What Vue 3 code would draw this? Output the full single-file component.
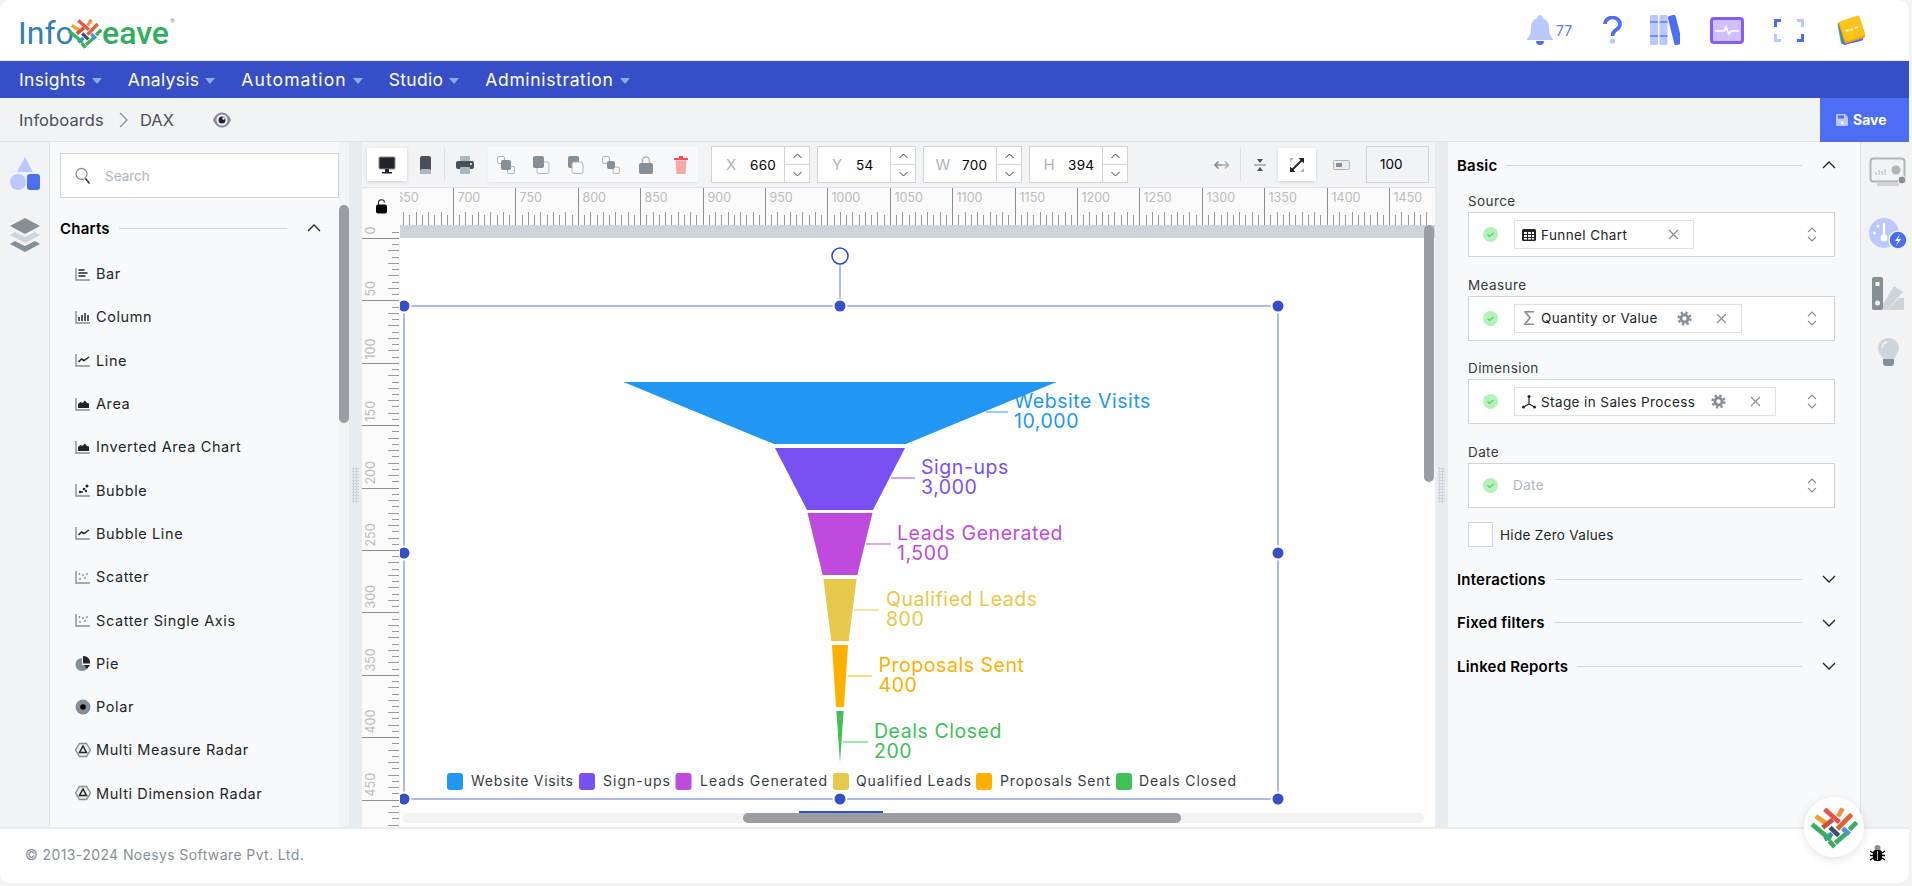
<template>
  <div class="app">
    <header class="topbar">
      <div class="logo">
        <span class="logo-info">Info</span>
        <svg class="logo-mark" viewBox="325 140 150 135">
          <line v-for="(s, i) in sticks" :key="i" :x1="s[0]" :y1="s[1]" :x2="s[2]" :y2="s[3]" :stroke="s[4]" stroke-width="14" />
        </svg>
        <span class="logo-eave">eave</span>
        <span class="logo-reg">®</span>
      </div>
      <div class="top-icons">
        <svg class="ti" width="26" height="30" viewBox="0 0 26 30">
          <path d="M13 0a2.500 2.500 0 0 1 2.500 3C20 4.500 22 8 22 13c0 5 1 8 4 11v1H0v-1c3-3 4-6 4-11 0-5 2-8.500 6.500-10A2.500 2.500 0 0 1 13 0z" fill="#bac8ff" />
          <path d="M9 26h8a4 4 0 0 1-8 0z" fill="#4c6ef5" />
        </svg>
        <span class="bell-count">77</span>
        <svg class="ti" style="margin-left:30px" width="19" height="28" viewBox="0 0 19 28">
          <path d="M2 8a7.500 6.500 0 1 1 11.500 5.500C11 15.500 9.500 16 9.500 20" fill="none" stroke="#4c6ef5" stroke-width="3.600" />
          <circle cx="9.500" cy="25" r="2.600" fill="#bac8ff" />
        </svg>
        <svg class="ti" style="margin-left:28px" width="30" height="30" viewBox="0 0 30 30">
          <rect x="0" y="0" width="8" height="30" rx="1.500" fill="#bac8ff" />
          <rect x="9.500" y="0" width="8" height="30" rx="1.500" fill="#bac8ff" />
          <path d="M0 7h8M0 21h8M9.500 7h8M9.500 21h8" stroke="#5c7cfa" stroke-width="1.500" />
          <rect x="21" y="0" width="8" height="30" rx="2" fill="#4c6ef5" transform="rotate(-14 25 15)" />
        </svg>
        <svg class="ti" style="margin-left:30px" width="34" height="27" viewBox="0 0 34 27">
          <rect x="1.500" y="1.500" width="31" height="24" rx="2.500" fill="#d0bfff" stroke="#845ef7" stroke-width="3" />
          <path d="M5 14h9l2-4 3 7 2-3h8" fill="none" stroke="#fff" stroke-width="1.600" />
        </svg>
        <svg class="ti" style="margin-left:30px" width="30" height="23" viewBox="0 0 30 23">
          <path d="M1.500 8V1.500H7" fill="none" stroke="#4c6ef5" stroke-width="3" />
          <path d="M1.500 15v6.500H7M23 1.500h5.500V8" fill="none" stroke="#bac8ff" stroke-width="3" />
          <path d="M28.500 15v6.500H23" fill="none" stroke="#4c6ef5" stroke-width="3" />
        </svg>
        <svg class="ti" style="margin-left:33px" width="28" height="30" viewBox="0 0 28 30">
          <rect x="2" y="6" width="20" height="22" rx="2" fill="#40c057" transform="rotate(-10 12 17)" />
          <rect x="3" y="6" width="21" height="22" rx="2" fill="#4c6ef5" transform="rotate(-14 14 16)" />
          <rect x="4" y="4" width="22" height="22" rx="2" fill="#fa9f05" transform="rotate(-18 15 15)" />
          <rect x="5" y="3" width="21" height="21" rx="2" fill="#fcc419" transform="rotate(-18 15 14)" />
          <path d="M9 16l3-1M13 15l3-1M18 13l3-1" stroke="#fff3bf" stroke-width="2" />
        </svg>
      </div>
    </header>

    <nav class="mainnav">
      <a v-for="m in menu" :key="m" class="nav-item">{{ m }}<i class="caret"></i></a>
    </nav>

    <div class="crumbs">
      <span class="crumb">Infoboards</span>
      <svg class="crumb-sep" width="9" height="16" viewBox="0 0 9 16"><path d="M1 1l7 7-7 7" fill="none" stroke="#868e96" stroke-width="1.200" /></svg>
      <span class="crumb">DAX</span>
      <svg class="eye" width="20" height="20" viewBox="0 0 20 20">
        <path d="M1 10c2-5 5.500-7.500 9-7.500s7 2.500 9 7.500c-2 5-5.500 7.500-9 7.500S3 15 1 10z" fill="#868e96" />
        <circle cx="10" cy="10" r="5.500" fill="#f1f3f5" />
        <circle cx="10" cy="10" r="3.500" fill="#212529" />
        <circle cx="11.500" cy="8.500" r="1.200" fill="#f1f3f5" />
      </svg>
      <button class="save">
        <svg width="12" height="12" viewBox="0 0 12 12"><path d="M1 0h8l3 3v8a1 1 0 0 1-1 1H1a1 1 0 0 1-1-1V1a1 1 0 0 1 1-1z" fill="#bac8ff" /><rect x="2" y="1.500" width="6" height="3" fill="#4c6ef5" /><rect x="5" y="7.500" width="2.500" height="2.500" fill="#fff" /></svg>
        Save
      </button>
    </div>

    <main class="body">
      <aside class="rail">
        <svg width="30" height="36" viewBox="0 0 30 36" class="rail-shapes">
          <path d="M15 0l8 15H7z" fill="#bac8ff" />
          <circle cx="8" cy="25" r="8" fill="#bac8ff" />
          <rect x="17" y="17" width="13" height="16" rx="3" fill="#4c6ef5" />
        </svg>
        <svg width="30" height="36" viewBox="0 0 30 36" class="rail-layers">
          <path d="M15 0l15 8-15 8L0 8z" fill="#868e96" />
          <path d="M0 17l5-3 10 5 10-5 5 3-15 8z" fill="#ced4da" />
          <path d="M0 26l5-3 10 5 10-5 5 3-15 8z" fill="#868e96" />
        </svg>
      </aside>

      <section class="palette">
        <div class="search">
          <svg width="16" height="18" viewBox="0 0 16 18"><circle cx="6.500" cy="7" r="5.500" fill="none" stroke="#868e96" stroke-width="1.300" /><path d="M10.500 11.500l4 5" stroke="#343a40" stroke-width="1.600" /></svg>
          <span>Search</span>
        </div>
        <div class="sec-head pal-head">
          <b>Charts</b><i class="rule"></i>
          <svg class="chev" width="14" height="8" viewBox="0 0 14 8"><path d="M1 7l6-6 6 6" fill="none" stroke="#212529" stroke-width="1.300" /></svg>
        </div>
        <div v-for="c in charts" :key="c.name" class="chart-item">
          <svg width="16" height="16" viewBox="0 0 16 16" v-html="chartIcons[c.icon]"></svg>
          <span>{{ c.name }}</span>
        </div>
        <div class="pal-track"><div class="pal-thumb"></div></div>
      </section>

      <div class="gutter"><i class="dots"></i></div>

      <section class="center">
        <div class="toolbar">
          <div class="tool on">
            <svg width="18" height="18" viewBox="0 0 18 18"><rect x="1" y="1" width="16" height="12" rx="1" fill="#212529" stroke="#868e96" /><path d="M7 13h4v3H7zM4 16h10v1.500H4z" fill="#212529" /></svg>
          </div>
          <div class="tool" style="width:37px">
            <svg width="11" height="18" viewBox="0 0 11 18"><rect width="11" height="18" rx="2" fill="#495057" /><rect y="13" width="11" height="5" rx="2" fill="#adb5bd" /></svg>
          </div>
          <i class="tsep"></i>
          <div class="tool" style="width:39px">
            <svg width="18" height="18" viewBox="0 0 18 18"><rect x="4" y="0" width="10" height="5" rx="1" fill="#adb5bd" /><rect x="0" y="5" width="18" height="8" rx="2" fill="#495057" /><rect x="4" y="11" width="10" height="7" rx="1" fill="#adb5bd" /><circle cx="15" cy="8" r="1" fill="#fff" /></svg>
          </div>
          <div class="tgroup">
            <div class="tslot"><svg width="18" height="18" viewBox="0 0 18 18"><rect x=".5" y=".5" width="7" height="7" rx="1.500" fill="none" stroke="#adb5bd" /><rect x="10.500" y="10.500" width="7" height="7" rx="1.500" fill="none" stroke="#adb5bd" /><rect x="4" y="4" width="10" height="10" rx="2" fill="#868e96" /></svg></div>
            <div class="tslot"><svg width="18" height="18" viewBox="0 0 18 18"><rect x="5" y="6" width="12" height="11.500" rx="2" fill="none" stroke="#adb5bd" /><rect x="1" y="0" width="11" height="12" rx="2" fill="#868e96" /></svg></div>
            <div class="tslot"><svg width="18" height="18" viewBox="0 0 18 18"><rect x="1" y="0" width="11" height="12" rx="2" fill="#868e96" /><rect x="5" y="6" width="11" height="11.500" rx="2" fill="#f8f9fa" stroke="#adb5bd" /></svg></div>
            <div class="tslot"><svg width="18" height="18" viewBox="0 0 18 18"><rect x=".5" y=".5" width="7" height="7" rx="1.500" fill="none" stroke="#adb5bd" /><rect x="11" y="11" width="6.500" height="6.500" rx="1.500" fill="none" stroke="#adb5bd" /><rect x="5" y="5" width="8" height="8" rx="2" fill="#868e96" /></svg></div>
            <div class="tslot"><svg width="14" height="18" viewBox="0 0 14 18"><path d="M3.500 8V4.500a3.500 3.500 0 0 1 7 0V8" fill="none" stroke="#adb5bd" stroke-width="1.500" /><rect y="7" width="14" height="11" rx="2" fill="#868e96" /></svg></div>
            <div class="tslot"><svg width="14" height="18" viewBox="0 0 14 18"><path d="M0 2h14v2H0z" fill="#fa5252" /><path d="M5 0h4v2H5z" fill="#fa5252" /><path d="M1.500 4.500h11L11.500 18h-9z" fill="#ffa8a8" /></svg></div>
          </div>
          <div v-for="f in coords" :key="f.label" class="coord">
            <span class="coord-l">{{ f.label }}</span>
            <span class="coord-v">{{ f.value }}</span>
            <div class="stepper">
              <span><svg width="9" height="6" viewBox="0 0 9 6"><path d="M.5 5l4-4 4 4" fill="none" stroke="#343a40" /></svg></span>
              <span><svg width="9" height="6" viewBox="0 0 9 6"><path d="M.5 1l4 4 4-4" fill="none" stroke="#343a40" /></svg></span>
            </div>
          </div>
          <div class="tool" style="width:38px;margin-left:74px">
            <svg width="15" height="10" viewBox="0 0 15 10"><path d="M8 5h6.500" stroke="#adb5bd" stroke-width="1.600" /><path d="M11 1.500L14.500 5 11 8.500" fill="none" stroke="#adb5bd" stroke-width="1.600" /><path d="M4.500 1.500L1 5l3.500 3.500M1 5h7" fill="none" stroke="#868e96" stroke-width="1.600" /></svg>
          </div>
          <i class="tsep"></i>
          <div class="tool" style="width:37px">
            <svg width="12" height="14" viewBox="0 0 12 14"><path d="M0 7h12" stroke="#868e96" stroke-width="1.200" /><path d="M6 5l3-4H3zM6 9l3 4H3z" fill="#495057" /></svg>
          </div>
          <div class="tool on" style="width:38px">
            <svg width="14" height="14" viewBox="0 0 14 14"><path d="M8.500 0H14v5.500zM5.500 14H0V8.500z" fill="#212529" /><path d="M2 12L12 2" stroke="#212529" stroke-width="2" /><path d="M0 0h4L0 4zM14 14h-4l4-4z" fill="#adb5bd" /></svg>
          </div>
          <div class="tool" style="width:50px">
            <svg width="17" height="10" viewBox="0 0 17 10"><rect x=".5" y=".5" width="16" height="9" rx="1" fill="#e9ecef" stroke="#adb5bd" /><rect x="3" y="3" width="6" height="4" fill="#868e96" /></svg>
          </div>
          <div class="zoombox">100</div>
        </div>

        <div class="workspace">
          <div class="corner">
            <svg width="11" height="15" viewBox="0 0 11 15"><path d="M2.500 7V4a3 3 0 0 1 6-.5" fill="none" stroke="#212529" stroke-width="1.100" /><rect y="5.500" width="11" height="9" rx="2" fill="#000" /></svg>
          </div>
          <svg class="hruler" width="1035" height="38" viewBox="400 187 1035 38">
            <line x1="400" x2="1435" y1="187.500" y2="187.500" stroke="#dee2e6" />
            <line v-for="t in hTicks" :key="t.x" :x1="t.x" :x2="t.x" :y1="t.y" y2="225" :stroke="t.c" />
            <text v-for="l in hLabels" :key="l.v" :x="l.x + 4" y="201.500" class="rtext">{{ l.v }}</text>
          </svg>
          <svg class="vruler" width="38" height="602" viewBox="362 225 38 602">
            <line v-for="t in vTicks" :key="t.y" :y1="t.y" :y2="t.y" :x1="t.x" x2="399" :stroke="t.c" />
            <text v-for="l in vLabels" :key="l.v" class="rtext" :transform="`translate(375 ${l.y - 4}) rotate(-90)`">{{ l.v }}</text>
          </svg>
          <div class="canvas">
            <svg class="board" width="1035" height="602" viewBox="400 225 1035 602">
              <rect x="400" y="225" width="1035" height="13" fill="#ced4da" />
              <polygon v-for="s in funnel" :key="s.name" :points="s.points" :fill="s.color" />
              <g v-for="s in funnel" :key="s.name + 'l'">
                <line :x1="s.lx1" :x2="s.lx2" :y1="s.ly" :y2="s.ly" :stroke="s.color" stroke-opacity=".8" stroke-width="1.200" />
                <text :x="s.tx" :y="s.ly - 4" :fill="s.color" class="ftext">{{ s.name }}</text>
                <text :x="s.tx" :y="s.ly + 16" :fill="s.color" class="ftext">{{ s.val }}</text>
              </g>
              <g v-for="l in legend" :key="l.name">
                <rect :x="l.sx" y="773" width="16" height="17" rx="3" :fill="l.color" />
                <text :x="l.tx" y="786" class="ltext" :textLength="l.w" lengthAdjust="spacing">{{ l.name }}</text>
              </g>
              <rect x="404" y="306" width="874" height="493" fill="none" stroke="#5c74d6" />
              <line x1="840" x2="840" y1="264" y2="306" stroke="#5c74d6" />
              <circle cx="840" cy="256" r="8" fill="#fff" stroke="#364fc7" stroke-width="1.600" />
              <circle v-for="(h, i) in handles" :key="i" :cx="h[0]" :cy="h[1]" r="6.500" fill="#364fc7" stroke="#fff" stroke-width="2" />
              <rect x="799" y="811" width="84" height="4" fill="#364fc7" />
            </svg>
            <div class="vbar"></div>
            <div class="hbar"><div class="hthumb"></div></div>
          </div>
        </div>
      </section>

      <div class="gutter"><i class="dots"></i></div>

      <section class="props">
        <div class="sec-head">
          <b>Basic</b><i class="rule"></i>
          <svg class="chev" width="14" height="8" viewBox="0 0 14 8"><path d="M1 7l6-6 6 6" fill="none" stroke="#212529" stroke-width="1.300" /></svg>
        </div>
        <div class="fields">
          <div v-for="f in fields" :key="f.label" class="field">
            <label>{{ f.label }}</label>
            <div class="selbox">
              <svg class="ok" width="15" height="15" viewBox="0 0 15 15"><circle cx="7.500" cy="7.500" r="7.500" fill="#b2f2bb" /><path d="M4.500 7.500l2 2 4-3.500" fill="none" stroke="#51cf66" stroke-width="1.200" /></svg>
              <div v-if="f.chip" class="chip" :style="{ width: f.w + 'px' }">
                <svg v-if="f.icon === 'table'" width="14" height="14" viewBox="0 0 14 14"><rect width="14" height="12" y="1" rx="1.500" fill="#212529" /><path d="M2 4h3v2H2zM6 4h3v2H6zM10 4h2v2h-2zM2 7h3v2H2zM6 7h3v2H6zM10 7h2v2h-2zM2 10h3v1.500H2zM6 10h3v1.500H6zM10 10h2v1.500h-2z" fill="#fff" /></svg>
                <span v-else-if="f.icon === 'sigma'" class="sigma">Σ</span>
                <svg v-else width="14" height="14" viewBox="0 0 14 14"><path d="M7 1v8M7 9l-5.500 3M7 9l5.500 3" stroke="#212529" fill="none" stroke-width="1.200" /><circle cx="7" cy="1.500" r="1.500" fill="#212529" /><circle cx="1.500" cy="12" r="1.500" fill="#212529" /><circle cx="12.500" cy="12" r="1.500" fill="#212529" /></svg>
                <span class="chip-t">{{ f.chip }}</span>
                <svg v-if="f.gear" class="gear" width="15" height="15" viewBox="0 0 16 16" :style="{ left: f.gear + 'px' }">
                  <circle cx="8" cy="8" r="6.300" fill="none" stroke="#868e96" stroke-width="2.600" stroke-dasharray="2.500 2.450" />
                  <circle cx="8" cy="8" r="3.800" fill="none" stroke="#868e96" stroke-width="3" />
                </svg>
                <svg class="x" width="11" height="11" viewBox="0 0 11 11"><path d="M1 1l9 9M10 1l-9 9" stroke="#868e96" stroke-width="1.100" /></svg>
              </div>
              <span v-else class="ph">{{ f.label }}</span>
              <svg class="updown" width="10" height="15" viewBox="0 0 10 15"><path d="M1 5l4-4 4 4M1 10l4 4 4-4" fill="none" stroke="#868e96" stroke-width="1.100" /></svg>
            </div>
          </div>
          <div class="check"><i></i><span>Hide Zero Values</span></div>
        </div>
        <div v-for="h in closedSections" :key="h" class="sec-head closed">
          <b>{{ h }}</b><i class="rule"></i>
          <svg class="chev" width="14" height="8" viewBox="0 0 14 8"><path d="M1 1l6 6 6-6" fill="none" stroke="#212529" stroke-width="1.300" /></svg>
        </div>
      </section>

      <aside class="rail rail-r">
        <svg width="39" height="32" viewBox="0 0 39 32">
          <rect x="1.500" y="1.500" width="34" height="23" rx="3" fill="#f1f3f5" stroke="#adb5bd" stroke-width="2" />
          <path d="M8 26h22v3H8z" fill="#ced4da" />
          <path d="M7 18v-3M10 18v-5M13 18v-4M16 18v-6" stroke="#adb5bd" />
          <circle cx="27" cy="13" r="4.500" fill="#adb5bd" />
          <circle cx="33" cy="23" r="4" fill="#868e96" stroke="#f1f3f5" />
        </svg>
        <svg width="38" height="32" viewBox="0 0 38 32" class="rr2">
          <circle cx="15" cy="15" r="15" fill="#bac8ff" />
          <path d="M15 5v12" stroke="#fff" stroke-width="2.400" />
          <circle cx="15" cy="20" r="3.500" fill="#fff" />
          <circle cx="5.500" cy="15" r="1.500" fill="#fff" /><circle cx="9" cy="8" r="1.500" fill="#fff" />
          <circle cx="29" cy="22" r="9" fill="#4c6ef5" stroke="#f1f3f5" stroke-width="1.500" />
          <path d="M31 16l-5 7h3l-2 5 5-7h-3z" fill="#fff" />
        </svg>
        <svg width="32" height="33" viewBox="0 0 32 33" class="rr3">
          <rect x="0" y="0" width="11" height="33" rx="2" fill="#868e96" />
          <rect x="3.500" y="5" width="4" height="4" fill="#f1f3f5" /><circle cx="5.500" cy="26" r="2.500" fill="#f1f3f5" />
          <path d="M11 27L22 9l9 6-16 18H11z" fill="#ced4da" />
          <path d="M15 33l12-12h5v12z" fill="#ced4da" />
        </svg>
        <svg width="21" height="30" viewBox="0 0 21 30" class="rr4">
          <path d="M10.500 0C4.500 0 0 4.500 0 10c0 4.500 3.500 7 5 11h11c1.500-4 5-6.500 5-11C21 4.500 16.500 0 10.500 0z" fill="#ced4da" />
          <path d="M5 21h11v4a3 3 0 0 1-3 3h-5a3 3 0 0 1-3-3z" fill="#868e96" />
          <path d="M4 10c0-3 2-5 5-6" fill="none" stroke="#f1f3f5" stroke-width="1.500" />
        </svg>
      </aside>
    </main>

    <footer class="foot">© 2013-2024 Noesys Software Pvt. Ltd.</footer>

    <div class="fab">
      <svg width="50" height="45" viewBox="325 140 150 135">
        <line v-for="(s, i) in sticks" :key="i" :x1="s[0]" :y1="s[1]" :x2="s[2]" :y2="s[3]" :stroke="s[4]" stroke-width="14" />
      </svg>
    </div>
    <svg class="bug" width="15" height="16" viewBox="0 0 15 16">
      <circle cx="7.500" cy="3" r="3" fill="#868e96" />
      <rect x="3" y="5" width="9" height="11" rx="3" fill="#000" />
      <path d="M0 6l3 2M15 6l-3 2M0 10.500h3M15 10.500h-3M0 15l3-2M15 15l-3-2" stroke="#000" stroke-width="1.400" />
      <path d="M7.500 6v9" stroke="#fff" stroke-width=".7" />
    </svg>
  </div>
</template>

<script setup>
const menu = ['Insights', 'Analysis', 'Automation', 'Studio', 'Administration']

// logo sticks, x1 y1 x2 y2 colour
const sticks = [
  [345, 174, 376, 194, '#f59f2e'],
  [372, 153, 416, 192, '#e8534a'],
  [412, 174, 426, 150, '#f0923b'],
  [366, 208, 396, 184, '#c8503f'],
  [410, 212, 453, 168, '#dd6236'],
  [388, 207, 414, 232, '#3d5168'],
  [372, 244, 394, 226, '#3d85c6'],
  [426, 210, 446, 228, '#4a90d9'],
  [334, 198, 390, 244, '#37ae62'],
  [386, 248, 402, 266, '#37ae62'],
  [404, 254, 436, 226, '#37ae62'],
  [446, 214, 468, 192, '#37ae62']
]

const charts = [
  { name: 'Bar', icon: 'bar' },
  { name: 'Column', icon: 'column' },
  { name: 'Line', icon: 'line' },
  { name: 'Area', icon: 'area' },
  { name: 'Inverted Area Chart', icon: 'area' },
  { name: 'Bubble', icon: 'bubble' },
  { name: 'Bubble Line', icon: 'line' },
  { name: 'Scatter', icon: 'scatter' },
  { name: 'Scatter Single Axis', icon: 'scatter' },
  { name: 'Pie', icon: 'pie' },
  { name: 'Polar', icon: 'polar' },
  { name: 'Multi Measure Radar', icon: 'radar' },
  { name: 'Multi Dimension Radar', icon: 'radar' }
]

const axis = '<path d="M1 2v12h14" fill="none" stroke="#868e96" stroke-width="1.400"/>'
const chartIcons = {
  bar: axis + '<path d="M3.500 4h6M3.500 7h9M3.500 10h7" stroke="#212529" stroke-width="1.600"/>',
  column: axis + '<path d="M4 12V8M7 12V6M10 12V4M13 12V6" stroke="#212529" stroke-width="1.500"/>',
  line: axis + '<path d="M3.500 10l3-3 2.500 1.500L14 5" fill="none" stroke="#212529" stroke-width="1.500"/>',
  area: axis + '<path d="M3 12V8l2.500-2 2 1 2.500-2.500L12 7l2 .500V12z" fill="#212529"/>',
  bubble: axis + '<circle cx="5" cy="10" r="1.200" fill="#212529"/><circle cx="9" cy="7" r="1.300" fill="#212529"/><circle cx="12" cy="4" r="1.500" fill="#212529"/><circle cx="11" cy="9" r="1.200" fill="#212529"/><circle cx="7" cy="10" r="1" fill="#212529"/>',
  scatter: axis + '<circle cx="5" cy="10" r=".8" fill="#495057"/><circle cx="8" cy="6" r=".8" fill="#495057"/><circle cx="12" cy="5" r=".8" fill="#495057"/><circle cx="10" cy="9" r=".8" fill="#495057"/><circle cx="4.500" cy="5" r=".8" fill="#495057"/>',
  pie: '<path d="M7 3a6.500 6.500 0 1 0 6.500 7H7z" fill="#868e96"/><path d="M8 1a6.500 6.500 0 0 1 7 7.500H8z" fill="#212529"/><path d="M9 10h6l-3 4z" fill="#212529"/>',
  polar: '<circle cx="8" cy="8" r="7.500" fill="#868e96"/><circle cx="8" cy="8" r="2.800" fill="#000"/>',
  radar: '<path d="M4.500 1.500h7L15.500 8l-4 6.500h-7L.5 8z" fill="#e9ecef" stroke="#868e96" stroke-width="1.400"/><path d="M8 4l3.500 6.500h-7z" fill="none" stroke="#212529" stroke-width="1.500"/>'
}

const coords = [
  { label: 'X', value: 660 },
  { label: 'Y', value: 54 },
  { label: 'W', value: 700 },
  { label: 'H', value: 394 }
]

// ruler: 5 units = 6.24px, x=700 sits at 453, y=0 sits at 238
const hTicks = []
const hLabels = []
for (let v = 650; v <= 1480; v += 5) {
  const x = Math.round(453 + (v - 700) * 1.248) + 0.5
  const major = v % 50 === 0
  hTicks.push({ x, y: major ? 188 : v % 10 === 0 ? 212 : 215, c: major ? '#868e96' : '#999' })
  if (major) hLabels.push({ v, x })
}
const vTicks = []
const vLabels = []
for (let v = -5; v <= 470; v += 5) {
  const y = Math.round(238 + v * 1.248) + 0.5
  const major = v % 50 === 0
  vTicks.push({ y, x: major ? 362 : v % 10 === 0 ? 388 : 392, c: major ? '#868e96' : '#999' })
  if (major) vLabels.push({ v, y })
}

const seg = (top, bottom, t, b) => `${840 - t},${top} ${840 + t},${top} ${840 + b},${bottom} ${840 - b},${bottom}`
const funnel = [
  { name: 'Website Visits', val: '10,000', color: '#2196f3', points: seg(382, 444, 216.5, 66), lx1: 986, lx2: 1008, ly: 412, tx: 1014 },
  { name: 'Sign-ups', val: '3,000', color: '#7950f2', points: seg(448, 510, 65, 33), lx1: 891, lx2: 915, ly: 478, tx: 921 },
  { name: 'Leads Generated', val: '1,500', color: '#be4bdb', points: seg(513, 575, 32.5, 17.3), lx1: 866, lx2: 891, ly: 544, tx: 897 },
  { name: 'Qualified Leads', val: '800', color: '#e6c84a', points: seg(579, 641, 16.6, 8.6), lx1: 854, lx2: 879, ly: 610, tx: 886 },
  { name: 'Proposals Sent', val: '400', color: '#fcb000', points: seg(645, 707, 8, 4), lx1: 847.5, lx2: 872, ly: 676, tx: 878.5 },
  { name: 'Deals Closed', val: '200', color: '#40c057', points: seg(711, 763, 3.6, 0), lx1: 843, lx2: 868, ly: 742, tx: 874 }
]

const legend = [
  { name: 'Website Visits', color: '#2196f3', sx: 447, tx: 471, w: 102 },
  { name: 'Sign-ups', color: '#7950f2', sx: 579, tx: 603, w: 67 },
  { name: 'Leads Generated', color: '#be4bdb', sx: 675.5, tx: 700, w: 127 },
  { name: 'Qualified Leads', color: '#e6c84a', sx: 833, tx: 856, w: 115 },
  { name: 'Proposals Sent', color: '#fcb000', sx: 976, tx: 1000, w: 110 },
  { name: 'Deals Closed', color: '#40c057', sx: 1116, tx: 1139, w: 97 }
]

const handles = [
  [404, 306], [840, 306], [1278, 306],
  [404, 553], [1278, 553],
  [404, 799], [840, 799], [1278, 799]
]

// gear = offset of the gear icon inside the chip
const fields = [
  { label: 'Source', chip: 'Funnel Chart', icon: 'table', w: 180 },
  { label: 'Measure', chip: 'Quantity or Value', icon: 'sigma', w: 228, gear: 162 },
  { label: 'Dimension', chip: 'Stage in Sales Process', icon: 'axis', w: 262, gear: 196 },
  { label: 'Date' }
]

const closedSections = ['Interactions', 'Fixed filters', 'Linked Reports']
</script>

<style>
html, body {
  margin: 0;
  background: #f3f3f3;
}
</style>

<style scoped>
.app {
  position: relative;
  width: 1909px;
  height: 883px;
  display: flex;
  flex-direction: column;
  background: #fff;
  border-radius: 10px;
  overflow: hidden;
  font-family: Inter, "Open Sans", sans-serif;
  font-size: 14px;
  color: #212529;
}

.topbar {
  height: 61px;
  box-sizing: border-box;
  flex: none;
  display: flex;
  align-items: center;
  justify-content: space-between;
  border-bottom: 1px solid #e9ecef;
}
.logo {
  display: flex;
  align-items: flex-end;
  height: 36px;
  margin: 6px 0 0 18px;
  font-family: Roboto, sans-serif;
  font-size: 32px;
  line-height: 36px;
  position: relative;
}
.logo-info { color: #2f7fb8; width: 49px; }
.logo-eave { color: #2fae60; width: 67px; margin-left: -1px; font-weight: 500; }
.logo-mark { width: 36px; height: 33px; margin-bottom: 1px; flex: none; }
.logo-reg { position: absolute; right: -6px; top: 2px; font-size: 6px; line-height: 8px; color: #868e96; }
.top-icons {
  display: flex;
  align-items: center;
  margin-right: 44px;
}
.bell-count {
  color: #5c7cfa;
  font-size: 14px;
  margin-left: 3px;
  width: 17px;
}
.ti { flex: none; }

.mainnav {
  height: 37px;
  flex: none;
  background: #364fc7;
  display: flex;
  align-items: center;
  padding-left: 19px;
  color: #fff;
  font-size: 17.5px;
  letter-spacing: .3px;
}
.nav-item {
  display: flex;
  align-items: center;
  margin-right: 26px;
}
.nav-item:nth-child(3) { letter-spacing: 1.1px; }
.nav-item:nth-child(5) { letter-spacing: .65px; }
.caret {
  width: 0;
  height: 0;
  margin: 3px 0 0 6px;
  border-left: 5.5px solid transparent;
  border-right: 5.5px solid transparent;
  border-top: 6px solid #91a7ff;
}

.crumbs {
  height: 44px;
  flex: none;
  background: #f1f3f5;
  display: flex;
  align-items: center;
  padding-left: 19px;
  border-bottom: 1px solid #dee2e6;
  box-sizing: border-box;
  color: #495057;
}
.crumb { font-size: 16.5px; letter-spacing: .1px; }
.crumb-sep { margin: 0 12px 0 15px; }
.eye { margin-left: 38px; }
.save {
  margin-left: auto;
  width: 89px;
  height: 44px;
  border: 0;
  background: #4c6ef5;
  color: #fff;
  font: 700 14px Inter, sans-serif;
  display: flex;
  align-items: center;
  gap: 5px;
  padding-left: 16px;
}

.body {
  flex: 1;
  display: flex;
  min-height: 0;
}
.rail {
  width: 49px;
  flex: none;
  background: #f1f3f5;
  border-right: 1px solid #dee2e6;
  display: flex;
  flex-direction: column;
  align-items: center;
}
.rail-shapes { margin-top: 15px; }
.rail-layers { margin-top: 25px; }
.rail-r { width: 48px; border-right: 0; border-left: 1px solid #dee2e6; }
.rail-r svg { margin-left: 6px; }
.rail-r svg:first-child { margin-top: 15px; }
.rr2 { margin-top: 29px; }
.rr3 { margin-top: 27px; }
.rr4 { margin-top: 28px; }

.palette {
  width: 299px;
  flex: none;
  position: relative;
  background: #f8f9fa;
  padding: 11px 10px 0 10px;
  box-sizing: border-box;
  overflow: hidden;
}
.search {
  height: 45px;
  box-sizing: border-box;
  background: #fff;
  border: 1px solid #ced4da;
  display: flex;
  align-items: center;
  padding-left: 14px;
  gap: 14px;
  color: #adb5bd;
  font-size: 13.5px;
}
.sec-head {
  height: 30px;
  display: flex;
  align-items: center;
  position: relative;
  font-size: 15px;
  color: #000;
  letter-spacing: .2px;
}
.sec-head b { font-weight: 600; }
.rule {
  flex: 1;
  height: 1px;
  background: #ced4da;
  margin-left: 9px;
}
.chev { margin-left: 20px; flex: none; }
.pal-head { margin: 15px 0 9px; width: 261px; }
.chart-item {
  height: 43.3px;
  display: flex;
  align-items: center;
  padding-left: 15px;
  gap: 5px;
  font-size: 14.5px;
  letter-spacing: .6px;
  white-space: nowrap;
}
.pal-track {
  position: absolute;
  right: 0;
  top: 0;
  bottom: 0;
  width: 10px;
  background: #f1f3f5;
}
.pal-thumb {
  margin-top: 63px;
  height: 218px;
  background: #9a9da1;
  border-radius: 5px;
}

.gutter {
  width: 13px;
  flex: none;
  background: #e9ecef;
  position: relative;
}
.dots {
  position: absolute;
  left: 3px;
  top: 325px;
  width: 7px;
  height: 36px;
  background-image: radial-gradient(#ced4da 1px, transparent 1.2px);
  background-size: 3px 3px;
}

.center {
  width: 1073px;
  flex: none;
  display: flex;
  flex-direction: column;
  background: #f1f3f5;
}
.toolbar {
  height: 45px;
  flex: none;
  display: flex;
  align-items: center;
  padding-left: 5px;
  box-sizing: border-box;
}
.tool {
  width: 40px;
  height: 33px;
  flex: none;
  display: flex;
  align-items: center;
  justify-content: center;
}
.tool.on {
  background: #fff;
  box-shadow: 0 1px 3px rgba(0, 0, 0, .15);
}
.tsep {
  width: 1px;
  height: 33px;
  background: #dee2e6;
  flex: none;
}
.tgroup {
  display: flex;
  height: 35px;
  margin: 0 6px 0 4px;
  width: 210px;
  background: #f8f9fa;
  box-shadow: 0 1px 2px rgba(0, 0, 0, .06);
  flex: none;
}
.tslot {
  width: 35px;
  display: flex;
  align-items: center;
  justify-content: center;
}
.coord {
  width: 99px;
  height: 37px;
  margin-left: 7px;
  flex: none;
  box-sizing: border-box;
  background: #fff;
  border: 1px solid #ced4da;
  display: flex;
  align-items: center;
  position: relative;
}
.coord-l {
  width: 38px;
  text-align: center;
  color: #adb5bd;
  font-size: 15px;
}
.coord-v { font-size: 13.5px; color: #000; letter-spacing: .3px; }
.stepper {
  position: absolute;
  right: 0;
  top: 0;
  bottom: 0;
  width: 24px;
  border-left: 1px solid #ced4da;
  display: flex;
  flex-direction: column;
}
.stepper span {
  flex: 1;
  display: flex;
  align-items: center;
  justify-content: center;
}
.stepper span:first-child { border-bottom: 1px solid #ced4da; }
.zoombox {
  width: 63px;
  height: 37px;
  box-sizing: border-box;
  flex: none;
  border: 1px solid #ced4da;
  background: #f1f3f5;
  font-size: 13.5px;
  line-height: 35px;
  padding-left: 13px;
  color: #000;
}

.workspace {
  flex: 1;
  display: grid;
  grid-template-columns: 38px 1035px;
  grid-template-rows: 38px 602px;
  background: #fafafa;
  min-height: 0;
  overflow: hidden;
}
.corner {
  display: flex;
  align-items: flex-end;
  justify-content: center;
  padding-bottom: 11px;
  box-sizing: border-box;
  border-top: 1px solid #dee2e6;
}
.hruler { display: block; }
.vruler { display: block; }
.rtext {
  font-family: Inter, sans-serif;
  font-size: 12.5px;
  fill: #bbb;
}
.canvas {
  position: relative;
  background: #fff;
  overflow: hidden;
}
.board { display: block; }
.ftext { font-family: Inter, sans-serif; font-size: 19.5px; letter-spacing: .55px; }
.ltext { font-family: Inter, sans-serif; font-size: 14px; fill: #373d3f; }
.vbar {
  position: absolute;
  right: 1px;
  top: 0;
  width: 10px;
  height: 257px;
  background: #9a9da1;
  border-radius: 5px;
}
.hbar {
  position: absolute;
  left: 2px;
  right: 11px;
  top: 588px;
  height: 10px;
  background: #f1f3f5;
  border-radius: 5px;
}
.hthumb {
  margin-left: 341px;
  width: 438px;
  height: 10px;
  background: #9a9da1;
  border-radius: 5px;
}

.props {
  width: 412px;
  flex: none;
  background: #f8f9fa;
  padding: 8px 0 0 9px;
  box-sizing: border-box;
}
.props .sec-head { width: 379px; }
.fields {
  padding: 11px 0 0 11px;
}
.field {
  margin-bottom: 17.5px;
}
.field label {
  display: block;
  height: 20px;
  line-height: 20px;
  margin-bottom: 1px;
  letter-spacing: .4px;
  font-size: 13.5px;
  color: #343a40;
}
.selbox {
  width: 367px;
  height: 45px;
  box-sizing: border-box;
  border: 1px solid #ced4da;
  background: #fff;
  display: flex;
  align-items: center;
  position: relative;
  padding-left: 14px;
}
.ok { flex: none; }
.chip {
  height: 29px;
  box-sizing: border-box;
  border: 1px solid #dee2e6;
  margin-left: 16px;
  display: flex;
  align-items: center;
  padding-left: 7px;
  position: relative;
}
.chip svg:first-child, .sigma { width: 14px; flex: none; }
.sigma { color: #868e96; font-size: 18px; text-align: center; }
.chip-t {
  margin-left: 5px;
  font-size: 13.5px;
  letter-spacing: .4px;
  white-space: nowrap;
}
.gear {
  position: absolute;
  top: 6px;
}
.chip .x {
  position: absolute;
  right: 14px;
  top: 8px;
}
.updown {
  position: absolute;
  right: 17px;
  top: 14px;
}
.ph {
  color: #adb5bd;
  margin-left: 15px;
  font-size: 13.5px;
  letter-spacing: .4px;
}
.check {
  display: flex;
  align-items: center;
  gap: 7px;
  height: 25px;
  margin-top: -3px;
  font-size: 13.5px;
  letter-spacing: .3px;
}
.check i {
  width: 25px;
  height: 25px;
  box-sizing: border-box;
  background: #fff;
  border: 1px solid #ced4da;
}
.closed { margin-top: 13.5px; }
.fields + .closed { margin-top: 17px; }

.foot {
  height: 56px;
  flex: none;
  box-sizing: border-box;
  border-top: 2px solid #e9ecef;
  padding-left: 25px;
  line-height: 52px;
  color: #868e96;
  letter-spacing: .4px;
  font-size: 14px;
}

.fab {
  position: absolute;
  left: 1804px;
  top: 797px;
  width: 60px;
  height: 60px;
  border-radius: 50%;
  background: #fff;
  box-shadow: 0 2px 10px rgba(0, 0, 0, .12);
  display: flex;
  align-items: center;
  justify-content: center;
}
.bug {
  position: absolute;
  left: 1870px;
  top: 845px;
}
</style>
